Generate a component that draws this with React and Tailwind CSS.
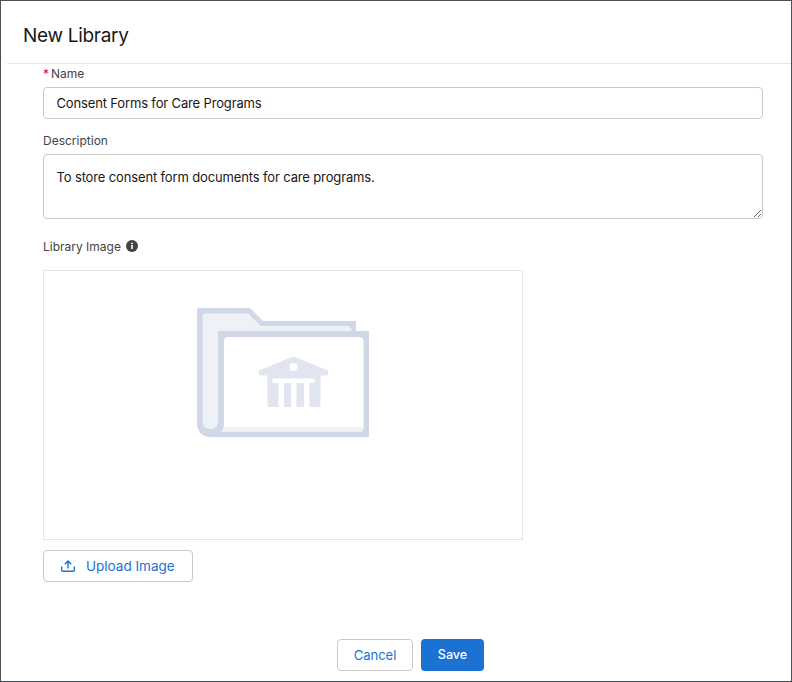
import React from 'react';

const FolderArt = () => (
  <svg width="172" height="129" viewBox="0 0 172 129" fill="none">
    {/* folder outline */}
    <path d="M1 0H53L66 13H159V23H172V129H13A13 13 0 0 1 0 116V1Q0 0 1 0Z" fill="#d0d8e8" />
    {/* back sheet */}
    <path d="M8 5.5H51L64 18H150Q154 18 155 23H21V115A8 8 0 0 1 5.5 115V8Q5.5 5.5 8 5.5Z" fill="#eef1f6" />
    {/* front sheet */}
    <path d="M31 29H162Q166.5 29 166.5 33.5V119.5Q166.5 124 162 124H24Q27 121 27 116V33Q27 29 31 29Z" fill="#ffffff" />
    <path d="M26.5 119H166.5V119.5Q166.5 124 162 124H24Q26 122 26.5 119Z" fill="#eef1f6" />
    {/* library building */}
    <path d="M96.5 48.5L131 62.5Q132 67.5 129 67.5H64Q61 67.5 62 62.5Z" fill="#e0e5ef" />
    <rect x="70.5" y="66" width="53" height="33" rx="1" fill="#e0e5ef" />
    <circle cx="96.5" cy="59" r="4" fill="#ffffff" />
    <rect x="75.5" y="70.5" width="42" height="4.5" fill="#ffffff" />
    <rect x="81.5" y="75" width="5.5" height="24" fill="#ffffff" />
    <rect x="94" y="75" width="5.5" height="24" fill="#ffffff" />
    <rect x="107" y="75" width="5.5" height="24" fill="#ffffff" />
  </svg>
);

const UploadIcon = () => (
  <svg width="14" height="12" viewBox="0 0 14 12" fill="none" stroke="#1b72d2" strokeWidth="1.4">
    <path d="M0.7 6.5V10.3Q0.7 11.3 1.7 11.3H12.3Q13.3 11.3 13.3 10.3V6.5" />
    <path d="M7 8.5V1.2M3.8 4.2L7 1L10.2 4.2" />
  </svg>
);

const InfoIcon = () => (
  <svg width="12" height="12" viewBox="0 0 12 12">
    <circle cx="6" cy="6" r="6" fill="#444444" />
    <rect x="5.2" y="5" width="1.6" height="4" fill="#ffffff" />
    <rect x="5.2" y="2.7" width="1.6" height="1.5" fill="#ffffff" />
  </svg>
);

export default function App() {
  return (
    <div className="w-[792px] h-[682px] flex flex-col bg-white border border-[#4b5257] font-['Inter',sans-serif] text-[#181818] overflow-hidden">
      <div className="ml-[6px] h-[63px] shrink-0 border-b border-[#e5e5e5] pl-4 pt-[21px]">
        <h2 className="text-[19px] leading-[28px] tracking-[-0.3px]">New Library</h2>
      </div>

      <form className="flex-1 flex flex-col pl-[42px] pr-[28px]">
        <label className="h-[23px] pt-[2px] text-xs leading-[16px] text-[#444444]">
          <span className="text-[#ea001e] mr-[2px]">*</span>Name
        </label>
        <input
          type="text"
          readOnly
          value="Consent Forms for Care Programs"
          className="h-[32px] w-full px-[12.5px] text-[13px] tracking-[-0.15px] border border-[#c9c9c9] rounded outline-none"
        />

        <label className="mt-[14px] h-[21px] text-xs leading-[16px] text-[#444444]">Description</label>
        <textarea
          readOnly
          value="To store consent form documents for care programs."
          className="h-[65px] w-full px-[12.5px] pt-[13px] text-[13px] tracking-[-0.14px] leading-[19px] border border-[#c9c9c9] rounded outline-none resize-y block"
        />

        <div className="mt-[20px] h-[31px] flex items-start gap-[5px] text-xs leading-[16px] text-[#444444]">
          <span>Library Image</span>
          <span className="pt-[1px]"><InfoIcon /></span>
        </div>

        <div className="w-[480px] h-[270px] border border-[#e5e5e5] flex justify-center pt-[37px]">
          <div className="h-[129px]"><FolderArt /></div>
        </div>

        <button
          type="button"
          className="mt-[10px] w-[150px] h-[32px] flex items-center gap-[11px] pl-[17px] bg-white border border-[#c9c9c9] rounded text-[13.5px] text-[#1b72d2]"
        >
          <UploadIcon />
          Upload Image
        </button>

        <div className="mt-[57px] flex justify-center gap-2 pl-[15px]">
          <button type="button" className="w-[76px] h-[32px] pt-[1px] bg-white border border-[#c9c9c9] rounded text-[13px] text-[#1b72d2]">
            Cancel
          </button>
          <button type="button" className="w-[63px] h-[32px] pt-[1px] bg-[#1b72d2] rounded text-[12.5px] font-medium text-white">
            Save
          </button>
        </div>
      </form>
    </div>
  );
}
